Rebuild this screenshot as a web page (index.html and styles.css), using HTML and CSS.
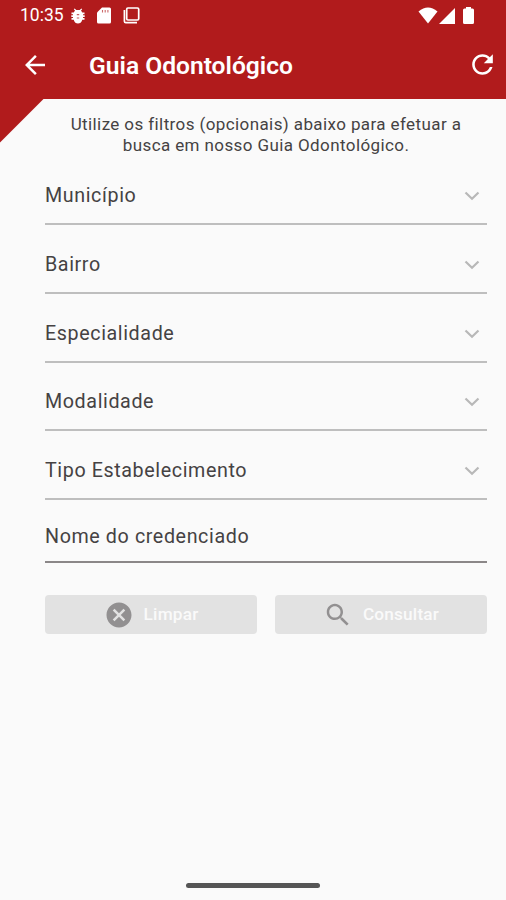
FILE: index.html
```html
<!DOCTYPE html>
<html lang="pt-BR">
<head>
<meta charset="utf-8">
<title>Guia Odontológico</title>
<link rel="stylesheet" href="styles.css">
</head>
<body>
<div class="screen">
  <header class="top">
    <div class="status">
      <span class="clock">10:35</span>
      <svg class="st-bug" viewBox="0 0 14 16"><path d="M4 2.500 2.800 1.200 3.600.4 5.300 1.900H8.700L10.400.4l.8.8L10 2.500l1.300 2H13.500v1.800H12v1h1.700v1.700H12v1h1.500v1.800H11.300C10.500 14.500 9 15.600 7 15.600S3.500 14.500 2.700 11.800H.5V10H2V9H.3V7.300H2v-1H.5V4.500H2.700z" fill="#fff"/><path d="M5.800 6.700h2.400M5.800 10h2.400" stroke="#b11b1c" stroke-width="1.200" opacity=".7"/></svg>
      <svg class="st-sd" viewBox="0 0 14 17"><path d="M5 .5h7.500Q14 .5 14 2v13q0 1.500-1.500 1.500h-11Q0 16.500 0 15V5.500z" fill="#fff"/><path d="M5.500 3v2.500M8.200 3v2.500M10.900 3v2.500" stroke="#b11b1c" stroke-width="1.100" opacity=".65"/></svg>
      <svg class="st-copy" viewBox="0 0 17 17" fill="none" stroke="#fff"><rect x="3.700" y="1" width="12" height="12" rx="1.200" stroke-width="1.700"/><path d="M1.400 3v11.200q0 1.400 1.400 1.400H14" stroke-width="1.700"/></svg>
      <span class="spacer"></span>
      <svg class="st-wifi" viewBox="0 0 20 17"><path d="M.5 4.500Q10-3.300 19.500 4.500L10 16.500z" fill="#fff"/></svg>
      <svg class="st-signal" viewBox="0 0 16 16"><path d="M16 0v16H0z" fill="#fff"/></svg>
      <svg class="st-battery" viewBox="0 0 11 17"><path d="M3 0h5v1.500h1.500Q11 1.500 11 3v12.500Q11 17 9.500 17h-8Q0 17 0 15.500V3Q0 1.500 1.500 1.500H3z" fill="#fff"/></svg>
    </div>
    <div class="bar">
      <svg class="icon back" viewBox="0 0 24 24"><path d="M20 11H7.830l5.590-5.590L12 4l-8 8 8 8 1.410-1.410L7.830 13H20v-2z"/></svg>
      <h1 class="title">Guia Odontológico</h1>
      <svg class="icon refresh" viewBox="0 0 24 24"><path d="M17.650 6.350C16.200 4.900 14.210 4 12 4c-4.420 0-7.990 3.580-7.990 8s3.570 8 7.990 8c3.730 0 6.840-2.550 7.730-6h-2.080c-.82 2.330-3.040 4-5.650 4-3.310 0-6-2.690-6-6s2.690-6 6-6c1.660 0 3.140.69 4.220 1.780L13 11h7V4l-2.350 2.350z"/></svg>
    </div>
  </header>
  <div class="corner"></div>
  <main class="form">
    <p class="intro">Utilize os filtros (opcionais) abaixo para efetuar a<br>busca em nosso Guia Odontológico.</p>
    <div class="field"><span>Município</span><svg class="chev" viewBox="0 0 16 10"><path d="m1.500 1.500 6.500 6.300 6.500-6.300"/></svg></div>
    <div class="field"><span>Bairro</span><svg class="chev" viewBox="0 0 16 10"><path d="m1.500 1.500 6.500 6.300 6.500-6.300"/></svg></div>
    <div class="field"><span>Especialidade</span><svg class="chev" viewBox="0 0 16 10"><path d="m1.500 1.500 6.500 6.300 6.500-6.300"/></svg></div>
    <div class="field"><span>Modalidade</span><svg class="chev" viewBox="0 0 16 10"><path d="m1.500 1.500 6.500 6.300 6.500-6.300"/></svg></div>
    <div class="field"><span>Tipo Estabelecimento</span><svg class="chev" viewBox="0 0 16 10"><path d="m1.500 1.500 6.500 6.300 6.500-6.300"/></svg></div>
    <div class="field name"><span>Nome do credenciado</span></div>
    <div class="actions">
      <button class="btn"><svg class="icon" viewBox="0 0 24 24"><path d="M12 2C6.470 2 2 6.470 2 12s4.470 10 10 10 10-4.470 10-10S17.530 2 12 2zm5 13.590L15.590 17 12 13.410 8.410 17 7 15.590 10.590 12 7 8.410 8.410 7 12 10.590 15.590 7 17 8.410 13.410 12 17 15.590z"/></svg><span>Limpar</span></button>
      <button class="btn"><svg class="icon" viewBox="0 0 24 24"><path d="M15.500 14h-.79l-.28-.27C15.410 12.590 16 11.110 16 9.500 16 5.910 13.090 3 9.500 3S3 5.910 3 9.500 5.910 16 9.500 16c1.610 0 3.090-.59 4.230-1.570l.27.28v.79l5 4.990L20.490 19l-4.990-5zm-6 0C7.010 14 5 11.990 5 9.500S7.010 5 9.500 5 14 7.010 14 9.500 11.990 14 9.500 14z"/></svg><span>Consultar</span></button>
    </div>
  </main>
  <div class="home"></div>
</div>
</body>
</html>
```

FILE: styles.css
```css
* { box-sizing: border-box; }
body { margin: 0; background: #fafafa; font-family: Roboto, sans-serif; }
.screen { width: 506px; height: 900px; display: flex; flex-direction: column; background: #fafafa; overflow: hidden; }
.top { height: 98.500px; flex: none; background: #b11b1c; color: #fff; }
.status { height: 31px; display: flex; align-items: center; padding: 0 32px 0 20px; }
.status svg { flex: none; }
.clock { width: 44px; font-size: 17.500px; font-weight: 400; line-height: 31px; }
.st-bug { width: 14px; height: 16px; margin-left: 7px; }
.st-sd { width: 14px; height: 17px; margin-left: 12px; }
.st-copy { width: 17px; height: 17px; margin-left: 12px; }
.spacer { flex: 1; }
.st-wifi { width: 20px; height: 17px; }
.st-signal { width: 16px; height: 16px; margin: 0 8px 0 1px; }
.st-battery { width: 11px; height: 17px; }
.bar { height: 67px; display: flex; align-items: center; padding: 0 8px 0 20px; }
.icon { width: 30px; height: 30px; flex: none; fill: currentColor; }
.title { margin: 1px 0 0 39px; flex: 1; font-size: 24.600px; font-weight: 600; line-height: 67px; white-space: nowrap; }
.refresh { width: 31px; height: 31px; }
.corner { width: 44px; height: 44px; flex: none; margin-bottom: -44px; background: #b11b1c; clip-path: polygon(0 0, 100% 0, 0 100%); }
.form { flex: 1; padding: 15px 19px 0 45px; color: #454243; }
.intro { height: 42.750px; margin: 0; text-align: center; font-size: 17px; line-height: 21px; letter-spacing: .4px; white-space: nowrap; }
.field { height: 68.750px; display: flex; align-items: flex-end; justify-content: space-between; border-bottom: 2px solid #bebebe; padding: 0 7px 14px 0; font-size: 19.700px; line-height: 26px; letter-spacing: .6px; white-space: nowrap; }
.chev { width: 16px; height: 10px; margin-bottom: 8px; fill: none; stroke: #b8b8b8; stroke-width: 2.200; }
.name { height: 63px; padding-bottom: 11px; border-color: #8b8788; }
.actions { display: grid; grid-template-columns: 1fr 1fr; gap: 18px; margin-top: 32px; }
.btn { height: 39px; display: flex; align-items: center; justify-content: center; gap: 10px; padding: 0; border: 0; border-radius: 4px; background: #e2e2e2; color: #fafafa; font: 500 17.200px/39px Roboto, sans-serif; letter-spacing: .2px; }
.btn .icon { fill: #929091; }
.home { width: 134px; height: 5px; flex: none; align-self: center; margin-bottom: 12px; border-radius: 3px; background: #555; }
```
